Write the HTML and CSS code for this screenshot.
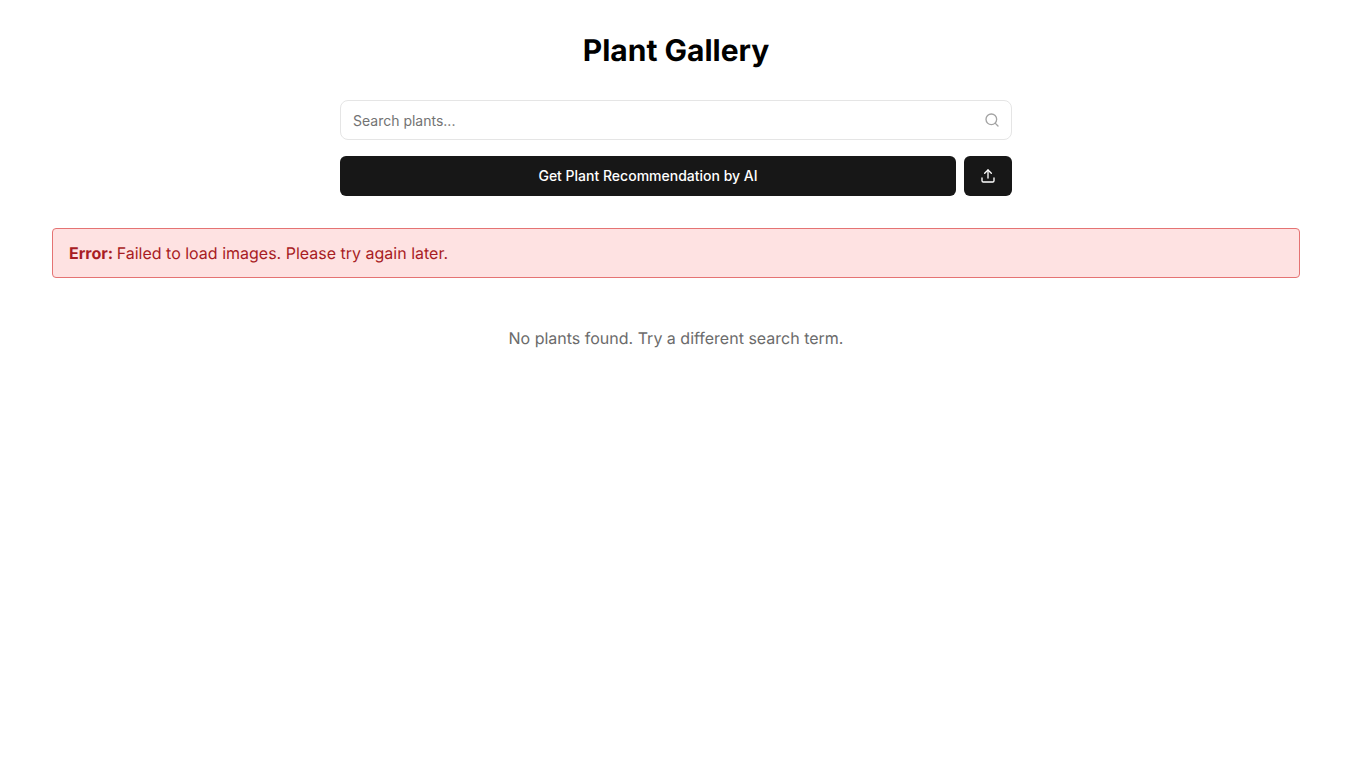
FILE: index.html
```html
<!DOCTYPE html>
<html lang="en">
<head>
  <meta charset="UTF-8" />
  <meta name="viewport" content="width=device-width, initial-scale=1.0"/>
  <title>Plant Gallery</title>
  <link rel="stylesheet" href="styles.css">
</head>
<body>
  <main class="container">
    <h1 class="title">Plant Gallery</h1>

    <div class="controls">
      <div class="search">
        <input type="text" class="search-input" placeholder="Search plants..." />
        <svg class="search-icon" width="16" height="16" viewBox="0 0 24 24" fill="none" stroke="currentColor" stroke-width="2" stroke-linecap="round" stroke-linejoin="round">
          <circle cx="11" cy="11" r="8"></circle>
          <path d="m21 21-4.3-4.3"></path>
        </svg>
      </div>
      <div class="actions">
        <button type="button" class="btn btn-main">Get Plant Recommendation by AI</button>
        <button type="button" class="btn btn-upload" aria-label="Upload">
          <svg width="16" height="16" viewBox="0 0 24 24" fill="none" stroke="currentColor" stroke-width="2" stroke-linecap="round" stroke-linejoin="round">
            <path d="M21 15v4a2 2 0 0 1-2 2H5a2 2 0 0 1-2-2v-4"></path>
            <polyline points="17 8 12 3 7 8"></polyline>
            <line x1="12" y1="3" x2="12" y2="15"></line>
          </svg>
        </button>
      </div>
    </div>

    <div class="alert"><p><strong>Error:</strong> Failed to load images. Please try again later.</p></div>

    <p class="empty">No plants found. Try a different search term.</p>
  </main>
</body>
</html>
```

FILE: styles.css
```css
* { margin: 0; padding: 0; box-sizing: border-box; }
html, body { height: 100%; }

body {
  background: #fff;
  font-family: Inter, 'Noto Sans', sans-serif;
  color: #000;
  text-rendering: geometricPrecision;
}

.container {
  padding: 32px 52px;
}

.title {
  font-size: 30px;
  line-height: 38px;
  font-weight: 700;
  text-align: center;
  margin-bottom: 30px;
}

.controls {
  width: 672px;
  margin: 0 auto 32px;
  display: flex;
  flex-direction: column;
  gap: 16px;
}

.search { position: relative; }

.search-input {
  display: block;
  width: 100%;
  height: 40px;
  padding: 0 40px 0 12px;
  font: inherit;
  font-size: 14px;
  color: #000;
  background: #fff;
  border: 1px solid #e5e5e5;
  border-radius: 8px;
  outline: none;
}
.search-input::placeholder { color: #737373; opacity: 1; }

.search-icon {
  position: absolute;
  top: 12px;
  right: 12px;
  color: #a3a3a3;
}

.actions {
  display: flex;
  gap: 8px;
}

.btn {
  height: 40px;
  background: #171717;
  color: #fff;
  border: none;
  border-radius: 6px;
  font: inherit;
  font-size: 14px;
  font-weight: 500;
  display: flex;
  align-items: center;
  justify-content: center;
}
.btn-main { flex: 1; padding-bottom: 2px; }
.btn-upload { width: 48px; }

.alert {
  height: 50px;
  padding: 0 16px;
  display: flex;
  align-items: center;
  background: #fee2e2;
  border: 1px solid #e57373;
  border-radius: 4px;
  color: #a81c24;
  font-size: 16px;
  line-height: 24px;
  margin-bottom: 48px;
}
.alert strong { font-weight: 700; margin-right: -1px; }

.empty {
  text-align: center;
  font-size: 16px;
  line-height: 24px;
  color: #6b6b6b;
}
```
